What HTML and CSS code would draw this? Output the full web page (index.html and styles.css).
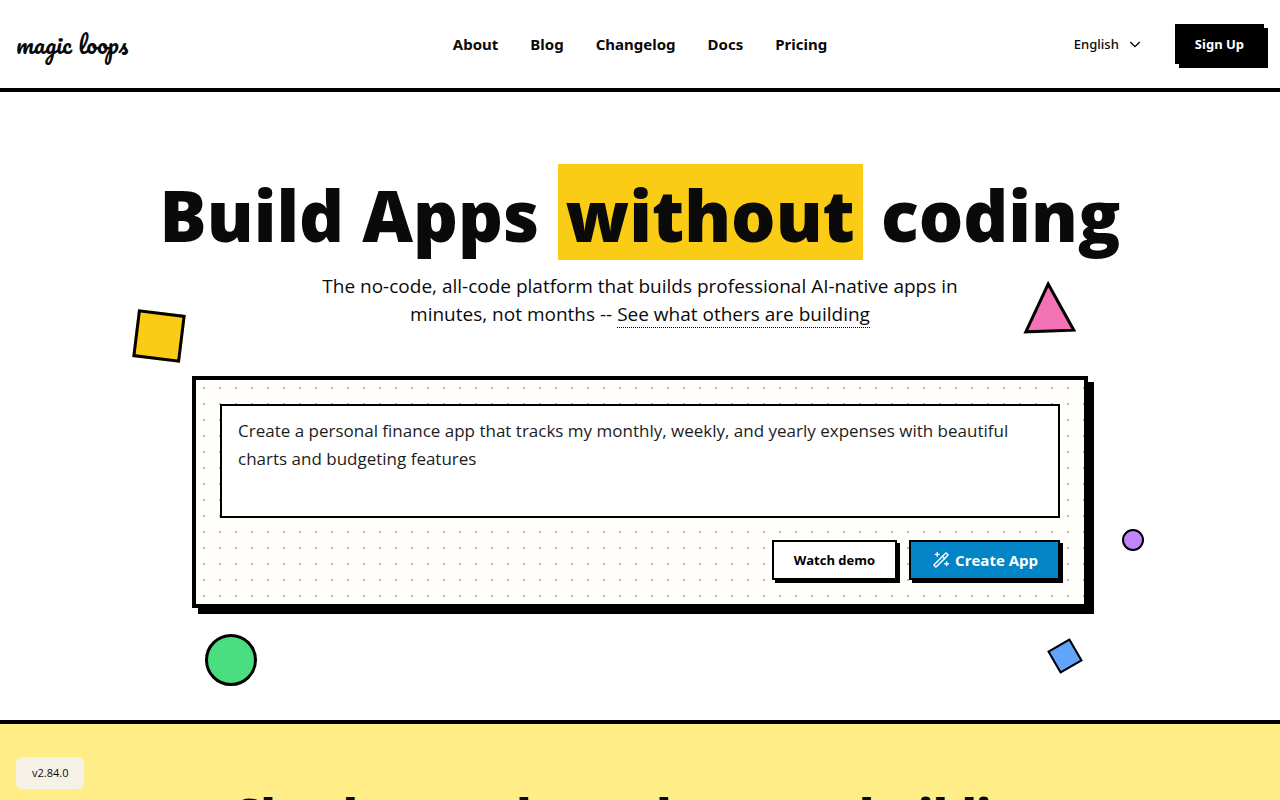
FILE: index.html
```html
<!DOCTYPE html>
<html lang="en">
<head>
    <meta charset="UTF-8">
    <meta name="viewport" content="width=device-width, initial-scale=1.0">
    <title>Magic Loops</title>
    <link rel="stylesheet" href="styles.css">
</head>
<body>
    <header class="site-header">
        <a class="logo" href="#">magic loops</a>
        <nav class="main-nav">
            <a href="#">About</a>
            <a href="#">Blog</a>
            <a href="#">Changelog</a>
            <a href="#">Docs</a>
            <a href="#">Pricing</a>
        </nav>
        <div class="header-actions">
            <div class="language">
                <select aria-label="Language">
                    <option>English</option>
                </select>
                <svg class="chevron" viewBox="0 0 24 24" aria-hidden="true"><path d="m5 9 7 7 7-7"/></svg>
            </div>
            <a class="sign-up" href="#">Sign Up</a>
        </div>
    </header>

    <main>
        <section class="hero">
            <h1>Build Apps <span class="highlight">without</span> coding</h1>
            <p class="tagline">The no-code, all-code platform that builds professional AI-native apps in minutes, not months -- <a href="#showcase">See what others are building</a></p>

            <form class="prompt-box">
                <textarea class="prompt" rows="3" aria-label="Describe your app">Create a personal finance app that tracks my monthly, weekly, and yearly expenses with beautiful charts and budgeting features</textarea>
                <div class="prompt-actions">
                    <button type="button" class="btn">Watch demo</button>
                    <button type="submit" class="btn btn-primary">
                        <svg viewBox="0 0 256 256" aria-hidden="true">
                            <rect x="16" y="108" width="224" height="40" rx="8" transform="rotate(-45 128 128)"/>
                            <path d="m144 80 32 32M80 32v48M56 56h48M200 152v48M176 176h48"/>
                        </svg>
                        Create App
                    </button>
                </div>
            </form>

            <div class="shape square-yellow"></div>
            <svg class="shape triangle-pink" viewBox="0 0 60 60" aria-hidden="true"><path d="M30 6 54 53H6Z"/></svg>
            <div class="shape circle-purple"></div>
            <div class="shape circle-green"></div>
            <div class="shape square-blue"></div>
        </section>

        <section class="showcase" id="showcase">
            <h2>Check out what others are building</h2>
        </section>
    </main>

    <div class="version">v2.84.0</div>
</body>
</html>
```
FILE: styles.css
```css
* {
    box-sizing: border-box;
}
body {
    margin: 0;
    font-family: "Segoe UI", "Open Sans", "Noto Sans", sans-serif;
    color: #0a0a0a;
    background: #fff;
    overflow-x: hidden;
}
a {
    color: inherit;
    text-decoration: none;
}

/* Header */
.site-header {
    display: grid;
    grid-template-columns: 1fr auto 1fr;
    align-items: center;
    padding: 24px 16px;
    border-bottom: 4px solid #000;
    font-family: "Segoe UI", "Noto Sans", sans-serif;
}
.logo {
    font-family: "Pacifico", cursive;
    font-size: 24px;
    line-height: 40px;
}
.main-nav {
    display: flex;
    gap: 32px;
    font-size: 15px;
    font-weight: 700;
    line-height: 24px;
}
.header-actions {
    display: flex;
    justify-content: flex-end;
    align-items: center;
    gap: 32px;
}
.language {
    display: flex;
    align-items: center;
    gap: 8px;
}
.language select {
    appearance: none;
    border: 0;
    padding: 0;
    background: none;
    color: inherit;
    font-family: inherit;
    font-size: 13px;
    font-weight: 500;
    line-height: 20px;
}
.chevron {
    width: 16px;
    height: 16px;
    fill: none;
    stroke: #000;
    stroke-width: 2;
}
.sign-up {
    padding: 0 20px;
    background: #000;
    color: #fff;
    font-size: 13px;
    font-weight: 700;
    line-height: 40px;
    box-shadow: 4px 4px 0 #000;
}

/* Hero */
.hero {
    position: relative;
    padding: 72px 16px 112px;
    border-bottom: 4px solid #000;
    text-align: center;
}
h1 {
    margin: 0;
    font-size: 70px;
    font-weight: 900;
    line-height: 90px;
}
.highlight {
    display: inline-block;
    padding: 6px 8px 0;
    background: #facc15;
}
.tagline {
    max-width: 672px;
    margin: 12px auto 48px;
    font-size: 19px;
    line-height: 28px;
}
.tagline a {
    border-bottom: 1px dotted #000;
}
.prompt-box {
    max-width: 896px;
    margin: 0 auto;
    padding: 24px;
    border: 4px solid #000;
    background: #fffefb radial-gradient(circle, #b8b8b8 1px, transparent 1px) 0 0 / 16px 16px;
    box-shadow: 6px 6px 0 #000;
}
.prompt {
    display: block;
    width: 100%;
    min-height: 114px;
    padding: 11px 16px;
    border: 2px solid #000;
    border-radius: 0;
    background: #fff;
    color: #1c1c1c;
    font-family: inherit;
    font-size: 17px;
    line-height: 28px;
    resize: none;
}
.prompt-actions {
    display: flex;
    justify-content: flex-end;
    gap: 12px;
    margin-top: 22px;
}
.btn {
    display: flex;
    align-items: center;
    gap: 4px;
    height: 40px;
    padding: 0 20px;
    border: 2px solid #000;
    background: #fff;
    color: #000;
    font-family: inherit;
    font-size: 13px;
    font-weight: 700;
    box-shadow: 3px 3px 0 #000;
}
.btn-primary {
    background: #0284c7;
    color: #fff;
    font-size: 15px;
}
.btn svg {
    width: 20px;
    height: 20px;
    fill: none;
    stroke: #fff;
    stroke-width: 18;
    stroke-linecap: round;
}

/* Floating shapes */
.shape {
    position: absolute;
}
.square-yellow {
    top: 220px;
    left: calc(50% - 505px);
    width: 48px;
    height: 48px;
    border: 3px solid #000;
    background: #facc15;
    transform: rotate(7deg);
}
.triangle-pink {
    top: 186px;
    left: calc(50% + 379px);
    width: 60px;
    height: 60px;
    fill: #f472b6;
    stroke: #000;
    stroke-width: 3;
    transform: rotate(-2deg);
}
.circle-purple {
    top: 437px;
    left: calc(50% + 482px);
    width: 22px;
    height: 22px;
    border: 2px solid #000;
    border-radius: 50%;
    background: #c084fc;
}
.circle-green {
    top: 542px;
    left: calc(50% - 435px);
    width: 52px;
    height: 52px;
    border: 3px solid #000;
    border-radius: 50%;
    background: #4ade80;
}
.square-blue {
    top: 551px;
    left: calc(50% + 412px);
    width: 26px;
    height: 26px;
    border: 2px solid #000;
    background: #60a5fa;
    transform: rotate(-30deg);
}

/* Showcase */
.showcase {
    padding: 60px 16px;
    background: #ffee88;
    text-align: center;
}
h2 {
    margin: 0;
    font-size: 45px;
    font-weight: 900;
    line-height: 60px;
}
.version {
    position: fixed;
    left: 16px;
    bottom: 11px;
    padding: 8px 16px;
    border-radius: 6px;
    background: #f5f1e6;
    font-size: 11px;
    line-height: 16px;
}
```
